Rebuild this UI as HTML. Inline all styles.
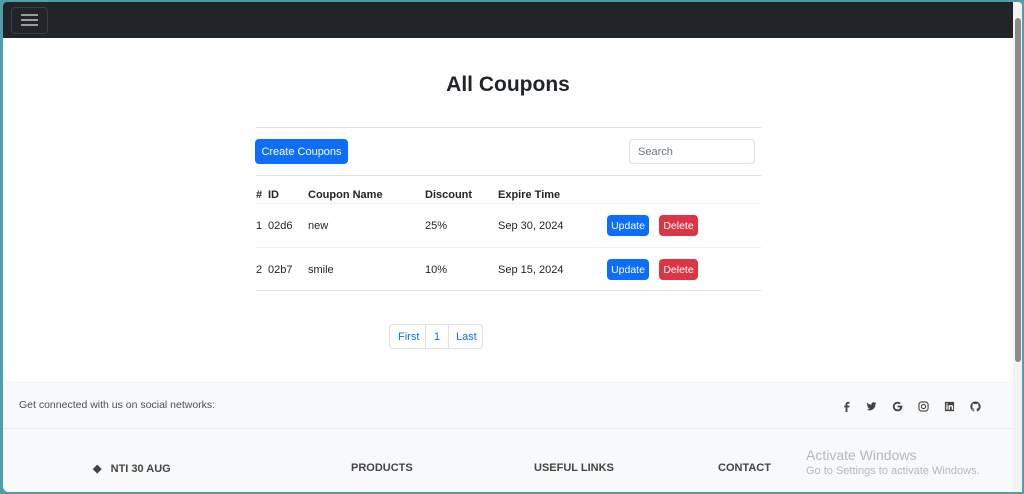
<!DOCTYPE html>
<html><head><style>
*{margin:0;padding:0;box-sizing:border-box}
body{width:1024px;height:494px;overflow:hidden;background:#4f9fab;font-family:"Liberation Sans",sans-serif;color:#212529;position:relative}
.a{position:absolute}
.t{font-size:11px;white-space:nowrap}
.b{font-weight:bold}
.btn{position:absolute;border-radius:4px;color:#fff;font-size:10.5px;display:flex;align-items:center;justify-content:center}
svg.i{position:absolute;top:399px;width:11px;height:11px;fill:#444}
</style></head><body>
<div class="a" style="left:3px;top:2px;width:1019px;height:490px;background:#fff;border-radius:4px 4px 0 6px;overflow:hidden">
 <div class="a" style="left:0;top:0;width:1010px;height:36px;background:#212529"></div>
 <div class="a" style="left:8px;top:5px;width:37px;height:27px;border:1px solid #3a3f44;border-radius:4px"></div>
 <div class="a" style="left:18px;top:12px;width:17px;height:2px;background:#9a9da0;box-shadow:0 5px 0 #9a9da0,0 10px 0 #9a9da0"></div>
 <div class="a" style="left:1010px;top:0;width:9px;height:490px;background:#f3f3f3"></div>
 <div class="a" style="left:1012px;top:16px;width:6px;height:344px;background:#8c8c8c;border-radius:3px"></div>
 <div class="a t b" style="left:0;width:1010px;top:71px;text-align:center;font-size:21px">All Coupons</div>
 <div class="a" style="left:253px;top:125px;width:505px;height:1px;background:#dee2e6"></div>
 <div class="btn" style="left:252px;top:137px;width:93px;height:25px;background:#0d6efd;font-size:11px">Create Coupons</div>
 <div class="a" style="left:626px;top:137px;width:126px;height:25px;border:1px solid #dee2e6;border-radius:4px"></div>
 <div class="a t" style="left:635px;top:144px;color:#6c757d">Search</div>
 <div class="a" style="left:253px;top:173px;width:505px;height:1px;background:#dee2e6"></div>
 <div class="a t b" style="left:253px;top:187px">#</div>
 <div class="a t b" style="left:265px;top:187px">ID</div>
 <div class="a t b" style="left:305px;top:187px">Coupon Name</div>
 <div class="a t b" style="left:422px;top:187px">Discount</div>
 <div class="a t b" style="left:495px;top:187px">Expire Time</div>
 <div class="a" style="left:253px;top:201px;width:505px;height:1px;background:#eceef0"></div>
 <div class="a t" style="left:253px;top:218px">1</div><div class="a t" style="left:265px;top:218px">02d6</div><div class="a t" style="left:305px;top:218px">new</div><div class="a t" style="left:422px;top:218px">25%</div><div class="a t" style="left:495px;top:218px">Sep 30, 2024</div>
 <div class="btn" style="left:604px;top:213px;width:42px;height:21px;background:#0d6efd">Update</div>
 <div class="btn" style="left:656px;top:213px;width:39px;height:21px;background:#dc3545">Delete</div>
 <div class="a" style="left:253px;top:245px;width:505px;height:1px;background:#eceef0"></div>
 <div class="a t" style="left:253px;top:262px">2</div><div class="a t" style="left:265px;top:262px">02b7</div><div class="a t" style="left:305px;top:262px">smile</div><div class="a t" style="left:422px;top:262px">10%</div><div class="a t" style="left:495px;top:262px">Sep 15, 2024</div>
 <div class="btn" style="left:604px;top:257px;width:42px;height:21px;background:#0d6efd">Update</div>
 <div class="btn" style="left:656px;top:257px;width:39px;height:21px;background:#dc3545">Delete</div>
 <div class="a" style="left:253px;top:288px;width:505px;height:1px;background:#dee2e6"></div>
 <div class="a" style="left:386px;top:322px;width:94px;height:25px;border:1px solid #dee2e6;border-radius:4px"></div>
 <div class="a" style="left:422px;top:322px;width:1px;height:25px;background:#dee2e6"></div>
 <div class="a" style="left:445px;top:322px;width:1px;height:25px;background:#dee2e6"></div>
 <div class="a t" style="left:395px;top:329px;color:#0d6efd">First</div>
 <div class="a t" style="left:431px;top:329px;color:#0d6efd">1</div>
 <div class="a t" style="left:453px;top:329px;color:#0d6efd">Last</div>
 <div class="a" style="left:0;top:379px;width:1010px;height:111px;background:#f8f9fa"></div>
 <div class="a" style="left:0;top:426px;width:1010px;height:1px;background:#e9ecef"></div>
 <div class="a t" style="left:16px;top:397px;color:#495057;font-size:10.5px">Get connected with us on social networks:</div>
 <svg class="i" style="left:838px" viewBox="0 0 12 12"><path d="M7 12V7h2l.3-2H7V3.8c0-.6.2-1 1-1h1.3V1.1C9 1 8.5 1 7.8 1 6.3 1 5 1.9 5 3.6V5H3.5v2H5v5z"/></svg>
 <svg class="i" style="left:863px" viewBox="0 0 12 12"><path d="M11.5 2.5c-.4.2-.9.3-1.3.4.5-.3.8-.7 1-1.3-.4.3-.9.4-1.4.5A2.2 2.2 0 0 0 6 4.1 6.3 6.3 0 0 1 1.4 1.8a2.2 2.2 0 0 0 .7 3c-.4 0-.7-.1-1-.3 0 1.1.8 2 1.8 2.2-.3.1-.7.1-1 0 .3.9 1.1 1.5 2.1 1.5A4.5 4.5 0 0 1 .5 9.2 6.3 6.3 0 0 0 10.2 3.6c.5-.3.9-.7 1.3-1.1z"/></svg>
 <svg class="i" style="left:889px" viewBox="0 0 12 12"><path d="M11.3 5H6v2h3.1A3.2 3.2 0 1 1 8.2 3.6l1.4-1.4A5.2 5.2 0 1 0 11.3 6c0-.4 0-.7 0-1z"/></svg>
 <svg class="i" style="left:915px" viewBox="0 0 12 12" fill="none" stroke="#444" stroke-width="1.2" style="fill:none"><rect x="1" y="1" width="10" height="10" rx="3" fill="none" stroke="#444"/><circle cx="6" cy="6" r="2.3" fill="none" stroke="#444"/></svg>
 <svg class="i" style="left:941px" viewBox="0 0 12 12"><path d="M1 1h10v10H1zM2.5 4.5v5h1.5v-5zM3.2 2.3a.8.8 0 1 0 0 1.6.8.8 0 0 0 0-1.6zM5 4.5v5h1.5V7c0-.8.4-1.2 1-1.2s.9.4.9 1.2v2.5H10V6.6c0-1.5-.8-2.2-1.9-2.2-.7 0-1.2.3-1.6.8v-.7z" fill-rule="evenodd"/></svg>
 <svg class="i" style="left:967px" viewBox="0 0 12 12"><path d="M6 .5a5.6 5.6 0 0 0-1.8 10.9c.3 0 .4-.1.4-.3v-1c-1.6.3-1.9-.7-1.9-.7-.3-.7-.6-.9-.6-.9-.5-.3 0-.3 0-.3.6 0 .9.6.9.6.5.9 1.3.6 1.6.5 0-.4.2-.6.4-.8-1.2-.1-2.5-.6-2.5-2.7 0-.6.2-1.1.6-1.5-.1-.1-.3-.7 0-1.5 0 0 .5-.1 1.5.6a5 5 0 0 1 2.8 0c1-.7 1.5-.6 1.5-.6.3.8.1 1.4 0 1.5.4.4.6.9.6 1.5 0 2.1-1.3 2.6-2.5 2.7.2.2.4.5.4 1v1.6c0 .2.1.3.4.3A5.6 5.6 0 0 0 6 .5z"/></svg>
 <div class="a t b" style="left:90px;top:460px;color:#444">◆&nbsp;&nbsp;&nbsp;NTI 30 AUG</div>
 <div class="a t b" style="left:348px;top:460px;color:#444">PRODUCTS</div>
 <div class="a t b" style="left:531px;top:460px;color:#444">USEFUL LINKS</div>
 <div class="a t b" style="left:715px;top:460px;color:#444">CONTACT</div>
 <div class="a t" style="left:803px;top:445px;color:#b5b8bb;font-size:14px">Activate Windows</div>
 <div class="a t" style="left:803px;top:463px;color:#b5b8bb;font-size:11px">Go to Settings to activate Windows.</div>
</div>
</body></html>
